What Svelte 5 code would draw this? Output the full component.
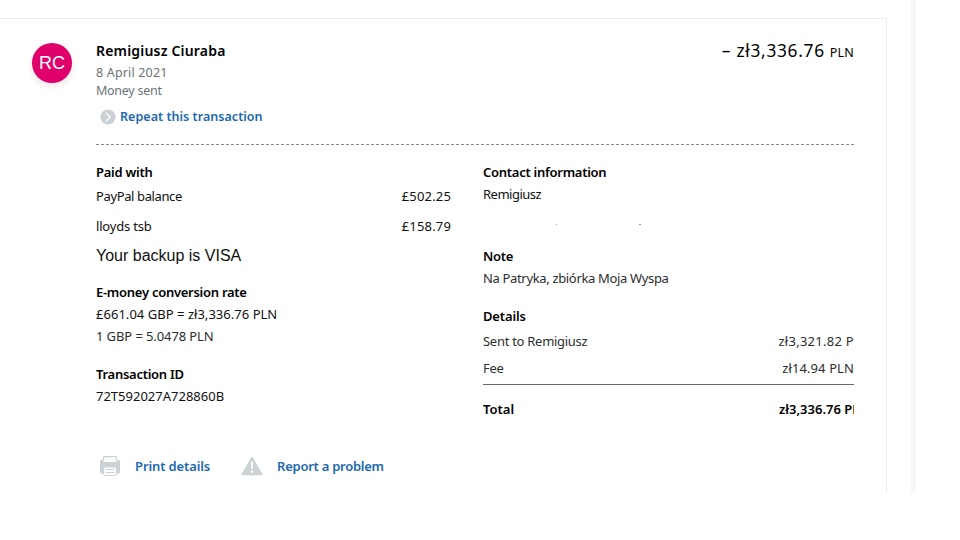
<script>
  const funding = [
    { label: 'PayPal balance', amount: '£502.25', kind: 'paypal' },
    { label: 'lloyds tsb', amount: '£158.79', kind: 'bank' }
  ];
</script>

<div class="page">
  <main class="panel">
    <header>
      <div class="avatar">RC</div>
      <div class="summary">
        <div class="who">
          <h1>Remigiusz Ciuraba</h1>
          <p class="date">8 April 2021</p>
          <p class="status">Money sent</p>
          <a class="repeat" href="#repeat">
            <svg width="16" height="16" viewBox="0 0 16 16">
              <circle cx="8" cy="8" r="7.6" fill="#cbd2d6" />
              <path d="M5.9 3.7 10.3 8l-4.4 4.3" fill="none" stroke="#fff" stroke-width="1.2" />
            </svg>
            <span>Repeat this transaction</span>
          </a>
        </div>
        <div class="amount"><span>– zł3,336.76</span><small>PLN</small></div>
      </div>
    </header>

    <svg class="rule" width="758" height="1"><path d="M0 .5H758" stroke="#8b8b8b" stroke-dasharray="3 2" /></svg>

    <div class="columns">
      <div class="left">
        <section>
          <h2 class="h-paid">Paid with</h2>
          {#each funding as item}
            <div class="row {item.kind}"><span class="label">{item.label}</span><span class="value">{item.amount}</span></div>
          {/each}
          <p class="backup">Your backup is VISA</p>
        </section>
        <section class="rate">
          <h2>E-money conversion rate</h2>
          <p class="total-rate">£661.04 GBP = zł3,336.76 PLN</p>
          <p class="unit-rate">1 GBP = 5.0478 PLN</p>
        </section>
        <section class="transaction">
          <h2>Transaction ID</h2>
          <p>72T592027A728860B</p>
        </section>
      </div>

      <div class="right">
        <section class="contact">
          <h2>Contact information</h2>
          <p>Remigiusz</p>
          <div class="specks"><i></i><i></i></div>
        </section>
        <section class="note">
          <h2>Note</h2>
          <p>Na Patryka, zbiórka Moja Wyspa</p>
        </section>
        <section class="details">
          <h2>Details</h2>
          <div class="row sent"><span class="label">Sent to Remigiusz</span><span class="value">zł3,321.82 P</span></div>
          <div class="row fee"><span class="label">Fee</span><span class="value">zł14.94 PLN</span></div>
          <div class="row total"><span class="label">Total</span><span class="value clip">zł3,336.76 PLN</span></div>
        </section>
      </div>
    </div>

    <footer>
      <a class="print" href="#print">
        <svg width="20" height="20" viewBox="0 0 20 20">
          <path d="M3.6 5V1.2Q3.6.6 4.2.6h11.6q.6 0 .6.6V5" fill="#fff" stroke="#cbd2d6" stroke-width="1.2" />
          <path d="M1.500 4H3v2h14V4h1.500Q20 4 20 5.500V16q0 1.500-1.500 1.500h-17Q0 17.500 0 16V5.500Q0 4 1.500 4z" fill="#cbd2d6" />
          <path d="M3.6 11h12.800v7.400q0 1-1 1H4.600q-1 0-1-1z" fill="#fff" stroke="#cbd2d6" />
          <path d="M5.500 13.500h9M5.500 16.500h9" stroke="#cbd2d6" />
        </svg>
        <span>Print details</span>
      </a>
      <a class="report" href="#report">
        <svg width="22" height="20" viewBox="0 0 22 20">
          <path d="M11 1 21.300 18.800H.700z" fill="#cbd2d6" stroke="#cbd2d6" stroke-linejoin="round" />
          <path d="M9.900 5.500h2.200l-.3 7.500h-1.600z" fill="#fff" />
          <circle cx="11" cy="15.800" r="1.300" fill="#fff" />
        </svg>
        <span>Report a problem</span>
      </a>
    </footer>
  </main>
  <div class="edge"></div>
</div>

<style>
  :global(body) { background: #fff; }
  .page {
    display: flex;
    height: 493px;
    font: 13px/22px "Noto Sans", "Open Sans", sans-serif;
    color: #111;
  }
  .panel {
    box-sizing: border-box;
    width: 887px;
    height: 475px;
    margin-top: 18px;
    padding: 21px 32px 0;
    border-top: 1px solid #e9ebed;
    border-right: 1px solid #e9ebed;
  }
  .edge { width: 5px; margin-left: 24px; background: #f5f7fb; }
  h1, h2, p { margin: 0; font-size: 13px; white-space: nowrap; }
  h2 { height: 22px; font-weight: 600; color: #000; letter-spacing: -.27px; }
  p { height: 22px; }
  header { display: flex; height: 104px; }
  .avatar {
    width: 40px;
    height: 40px;
    margin-top: 3px;
    border-radius: 50%;
    background: #e0006c;
    box-shadow: 0 3px 6px rgba(0, 0, 0, .1);
    color: #fff;
    font: 18px/40px "Liberation Sans", Arial, sans-serif;
    text-align: center;
  }
  .summary { display: flex; justify-content: space-between; width: 758px; margin-left: 24px; }
  h1 { font-size: 14px; font-weight: 600; color: #000; line-height: 22px; letter-spacing: .19px; }
  .date, .status { height: 18px; line-height: 18px; color: #6c7378; font-size: 12.5px; }
  .date { margin-top: 2px; letter-spacing: .17px; }
  .status { letter-spacing: -.27px; }
  a { color: #2069b0; font-weight: 600; text-decoration: none; white-space: nowrap; }
  .repeat { display: flex; align-items: center; gap: 4px; height: 22px; margin: 6px 0 0 4px; font-size: 12.5px; letter-spacing: .04px; }
  .amount { display: flex; align-items: baseline; height: 22px; gap: 5px; font-size: 17.3px; letter-spacing: .72px; color: #000; white-space: nowrap; }
  .amount small { font-size: 12.5px; letter-spacing: .2px; }
  .rule { display: block; margin-left: 64px; }
  .columns { display: flex; justify-content: space-between; width: 758px; height: 294px; margin: 16px 0 0 64px; }
  .left { width: 355px; }
  .right { width: 371px; }
  .row { display: flex; justify-content: space-between; height: 22px; white-space: nowrap; }
  .paypal { margin-top: 2px; }
  .paypal .label { letter-spacing: -.38px; }
  .bank { margin-top: 8px; }
  .bank .label { letter-spacing: -.18px; }
  .left .value { letter-spacing: .16px; }
  .backup { margin-top: 8px; font: 16px/22px "Liberation Sans", Arial, sans-serif; }
  .rate { margin-top: 14px; }
  .total-rate { letter-spacing: .03px; }
  .unit-rate { letter-spacing: -.1px; }
  .unit-rate, .note p, .sent, .fee { color: #2c2e2f; }
  .transaction { margin-top: 16px; }
  .contact p { letter-spacing: -.5px; }
  .specks { display: flex; gap: 82px; height: 1px; margin: 19px 0 0 73px; }
  .specks i { width: 1px; background: #8aa0ae; }
  .specks i + i { width: 2px; }
  .note { margin-top: 20px; }
  .note p { letter-spacing: -.34px; }
  .details { margin-top: 16px; }
  .details h2 { letter-spacing: -.15px; }
  .sent { margin-top: 3px; }
  .sent .label, .fee .label { letter-spacing: -.28px; }
  .sent .value { letter-spacing: .27px; }
  .fee { margin-top: 5px; padding-bottom: 5px; border-bottom: 1px solid #6b6b6f; }
  .fee .value { letter-spacing: .1px; }
  .total { margin-top: 13px; font-weight: 600; color: #000; }
  .clip { width: 75px; overflow: hidden; }
  footer { display: flex; margin-left: 68px; }
  footer a { display: flex; align-items: center; height: 22px; font-size: 13px; letter-spacing: -.12px; }
  .print span { margin-left: 15px; }
  .report { margin-left: 31px; letter-spacing: -.26px; }
  .report span { margin-left: 14px; }
</style>
